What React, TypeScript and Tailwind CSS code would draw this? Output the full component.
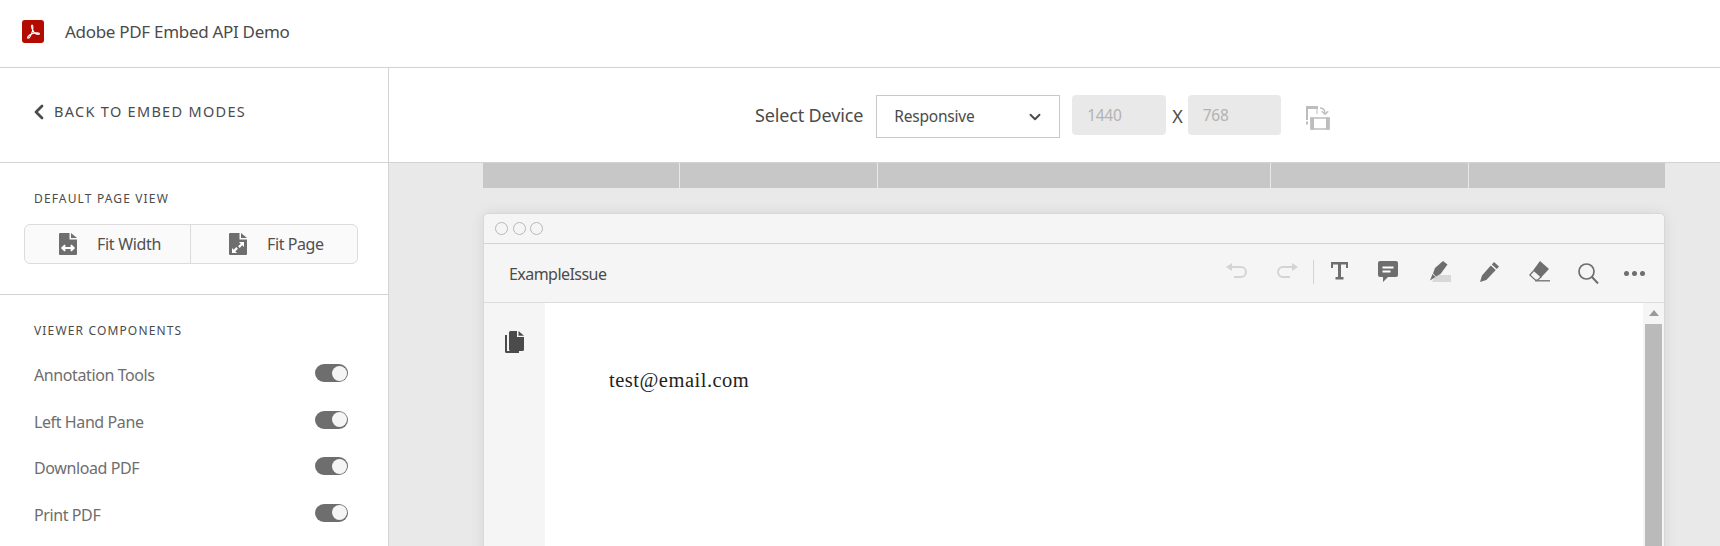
import React from 'react';
import { ChevronDown, ChevronLeft } from 'lucide-react';

const sans = "font-['Noto_Sans',sans-serif]";

function PdfLogo() {
  return (
    <svg width="22" height="23" viewBox="0 0 23 23" preserveAspectRatio="none" className="block">
      <rect width="23" height="23" rx="3" fill="#b30b00" />
      <path
        d="M10.6 5.2c-.9 0-.9 1.5.2 4 .8 1.9 2.4 4 3.9 4.7 1.5.6 3.3.6 3.5-.1.2-.8-1.6-1.1-3.7-.9-2.5.2-5.2 1-6.9 2.3-1.4 1.1-2.2 2.5-1.4 2.9.9.4 2.3-1.2 3.5-3.8 1-2.2 1.7-4.7 1.7-6.9 0-1.300-.2-2.200-.8-2.200z"
        fill="none"
        stroke="#fff"
        strokeWidth="1.2"
      />
    </svg>
  );
}

function PageIcon({ kind }: { kind: 'width' | 'page' }) {
  return (
    <svg width="18" height="22" viewBox="0 0 18 22" className="block">
      <path d="M0 1A1 1 0 0 1 1 0h9.500v6.500H18V21a1 1 0 0 1-1 1H1a1 1 0 0 1-1-1z" fill="#6e6e6e" />
      <path d="M12 0l6 5h-6z" fill="#6e6e6e" />
      {kind === 'width' ? (
        <path d="M4 15h10M6.200 12.300L3.300 15l2.900 2.700M11.800 12.300L14.700 15l-2.900 2.700" stroke="#fff" strokeWidth="2" fill="none" />
      ) : (
        <g fill="#fff">
          <path d="M3 20v-5l1.700 1.700 2.600-2.600 1.600 1.600-2.600 2.600L8 20z" />
          <path d="M15 9v5l-1.700-1.700-2.600 2.600-1.600-1.600 2.600-2.600L10 9z" />
        </g>
      )}
    </svg>
  );
}

function Toggle() {
  return (
    <div className="flex h-[18px] w-[33px] items-center justify-end rounded-full bg-[#6e6e6e] pr-[1.5px]">
      <div className="h-[15px] w-[15px] rounded-full bg-[#f5f5f5]" />
    </div>
  );
}

function RotateIcon() {
  return (
    <svg width="24" height="24" viewBox="0 0 24 24" className="block" fill="none">
      {/* portrait phone */}
      <path d="M0 0h12v3H2v8H0z" fill="#bdbdbd" />
      <path d="M11 3v5" stroke="#c9c9c9" strokeWidth="1.2" />
      <path d="M1 11v9" stroke="#bdbdbd" strokeWidth="2" strokeDasharray="3 1.500" />
      {/* turn arrow */}
      <path d="M14 2c3 0 5 1.500 5 5.500" stroke="#bdbdbd" strokeWidth="1.300" />
      <path d="M15.800 5.300l3.200 3 3.200-3" stroke="#bdbdbd" strokeWidth="1.300" />
      {/* landscape phone */}
      <rect x="5" y="12" width="18" height="11" stroke="#bdbdbd" strokeWidth="1.500" />
      <rect x="4.500" y="11.500" width="3.500" height="12" fill="#bdbdbd" />
      <rect x="20" y="11.500" width="3.500" height="12" fill="#bdbdbd" />
    </svg>
  );
}

function ToolbarIcons() {
  return (
    <div className="ml-auto flex items-center">
      <svg width="22" height="15" viewBox="0 0 22 15" fill="none" className="mb-[5px]">
        <path d="M7 0 1 4l6 4z" fill="#d4d4d4" />
        <path d="M6 4h10a5 5 0 0 1 0 10H9" stroke="#d4d4d4" strokeWidth="2" />
      </svg>
      <svg width="22" height="15" viewBox="0 0 22 15" fill="none" className="mb-[5px] ml-[30px]">
        <path d="M15 0l6 4-6 4z" fill="#d4d4d4" />
        <path d="M16 4H6a5 5 0 0 0 0 10h7" stroke="#d4d4d4" strokeWidth="2" />
      </svg>
      <div className="mb-[3px] ml-[14px] h-[24px] w-px bg-[#d4d4d4]" />
      <svg width="17" height="18" viewBox="0 0 17 18" className="mb-[5px] ml-[17px]">
        <path d="M0 0h17v6h-2V2.500H10V15h2.500v2.500h-8V15H7V2.500H2V6H0z" fill="#6e6e6e" />
      </svg>
      <svg width="20" height="21" viewBox="0 0 20 21" className="mb-[3px] ml-[30px]">
        <path d="M2 0h16a2 2 0 0 1 2 2v12a2 2 0 0 1-2 2H10l-5 5v-5H2a2 2 0 0 1-2-2V2a2 2 0 0 1 2-2z" fill="#6e6e6e" />
        <path d="M4.500 5.500h11v2h-11zM4.500 9.500h8v2h-8z" fill="#fff" />
      </svg>
      <svg width="22" height="21" viewBox="0 0 22 21" className="mb-[3px] ml-[31px]">
        <path d="M7 14h15v7H3z" fill="#d8d8d8" />
        <path d="M14 0l4.500 3.500L11.500 13 7 15.500 4 12.500 6 7z" fill="#6e6e6e" />
        <path d="M3.500 13l3 3-5.500 3.500z" fill="#6e6e6e" />
      </svg>
      <svg width="19" height="20" viewBox="0 0 19 20" className="mb-[3px] ml-[29px]">
        <path d="M14 0l5 4.500L16.800 7l-5-4.500zM10.800 3.500l5 4.500-9.500 10L0 20l2-6.500z" fill="#6e6e6e" />
      </svg>
      <svg width="21" height="21" viewBox="0 0 21 21" fill="none" className="mb-[3px] ml-[30px]">
        <path d="M4.500 10L0.800 14l5.500 5h2.500l3.700-3.500" stroke="#6e6e6e" strokeWidth="1.200" />
        <path d="M11 0l9 8-8 8.500-8-7z" fill="#6e6e6e" />
        <path d="M6 19.800h15" stroke="#6e6e6e" strokeWidth="1.300" />
      </svg>
      <svg width="21" height="21" viewBox="0 0 21 21" fill="none" className="ml-[28px]">
        <circle cx="8.500" cy="8.500" r="7.500" stroke="#6e6e6e" strokeWidth="1.700" />
        <path d="M14 14l6 6.500" stroke="#6e6e6e" strokeWidth="2" />
      </svg>
      <div className="ml-[25px] mr-[19px] mt-[1px] flex gap-[3px]">
        <div className="h-[5px] w-[5px] rounded-full bg-[#6e6e6e]" />
        <div className="h-[5px] w-[5px] rounded-full bg-[#6e6e6e]" />
        <div className="h-[5px] w-[5px] rounded-full bg-[#6e6e6e]" />
      </div>
    </div>
  );
}

export default function App() {
  const components = ['Annotation Tools', 'Left Hand Pane', 'Download PDF', 'Print PDF'];

  return (
    <div className={`flex h-[546px] flex-col overflow-hidden bg-white text-[#4b4b4b] ${sans}`}>
      <header className="flex h-[68px] shrink-0 items-center border-b border-[#d3d3d3] pb-[4px] pl-[22px]">
        <PdfLogo />
        <span className="ml-[21px] text-[17px] tracking-[-0.3px]">Adobe PDF Embed API Demo</span>
      </header>

      <div className="flex min-h-0 flex-1">
        <aside className="w-[389px] shrink-0 border-r border-[#d3d3d3]">
          <div className="flex h-[95px] items-center border-b border-[#d3d3d3] pb-[6px] pl-[27px]">
            <ChevronLeft size={24} strokeWidth={2.8} className="text-[#4b4b4b]" />
            <span className="ml-[3px] text-[14.5px] tracking-[1.3px]">BACK TO EMBED MODES</span>
          </div>

          <div className="h-[132px] border-b border-[#d3d3d3] px-[24px] pt-[27px]">
            <div className="pl-[10px] text-[12px] leading-[18px] tracking-[1.15px]">DEFAULT PAGE VIEW</div>
            <div className="mt-[16px] flex h-[40px] w-[334px] rounded-[6px] border border-[#dcdcdc] bg-[#fafafa] text-[#505050]">
              <div className="flex w-[166px] items-center border-r border-[#dcdcdc] pl-[34px]">
                <PageIcon kind="width" />
                <span className="ml-[20px] text-[16px] tracking-[-0.3px]">Fit Width</span>
              </div>
              <div className="flex flex-1 items-center pl-[38px]">
                <PageIcon kind="page" />
                <span className="ml-[20px] text-[16px] tracking-[-0.4px]">Fit Page</span>
              </div>
            </div>
          </div>

          <div className="pl-[34px] pr-[40px] pt-[27px]">
            <div className="text-[12px] leading-[18px] tracking-[1.15px]">VIEWER COMPONENTS</div>
            <div className="mt-[24px] flex flex-col gap-[28.5px]">
              {components.map((name) => (
                <div key={name} className="flex h-[18px] items-center justify-between">
                  <span className="mt-[4px] text-[16px] tracking-[-0.4px] text-[#6e6e6e]">{name}</span>
                  <Toggle />
                </div>
              ))}
            </div>
          </div>
        </aside>

        <main className="flex min-w-0 flex-1 flex-col">
          <div className="flex h-[95px] shrink-0 items-start border-b border-[#d3d3d3] pl-[366px] pt-[27px]">
            <span className="mt-[8px] text-[18px] leading-[24px] tracking-[-0.15px]">Select Device</span>
            <div className="ml-[13px] flex h-[43px] w-[184px] items-center justify-between border border-[#c9c9c9] bg-white pl-[17px] pr-[15px] text-[15.5px] tracking-[-0.2px]">
              <span>Responsive</span>
              <ChevronDown size={18} strokeWidth={2.5} className="text-[#4b4b4b]" />
            </div>
            <div className="ml-[12px] flex h-[40px] w-[94px] items-center rounded-[4px] bg-[#e9e9e9] pl-[15px] pt-[2px] text-[15.5px] tracking-[-0.3px] text-[#b3b3b3]">
              1440
            </div>
            <span className="ml-[6px] mt-[9px] text-[18px] leading-[24px]">X</span>
            <div className="ml-[5px] flex h-[40px] w-[93px] items-center rounded-[4px] bg-[#e9e9e9] pl-[15px] pt-[2px] text-[15.5px] tracking-[-0.3px] text-[#b3b3b3]">
              768
            </div>
            <div className="ml-[25px] mt-[11px]">
              <RotateIcon />
            </div>
          </div>

          <div className="min-h-0 flex-1 overflow-hidden bg-[#e9e9e9] pl-[94px] pr-[55px]">
            <div className="flex h-[25px] bg-[#c7c7c7]">
              <div className="w-[197px] border-r border-[#e9e9e9]" />
              <div className="w-[198px] border-r border-[#e9e9e9]" />
              <div className="w-[393px] border-r border-[#e9e9e9]" />
              <div className="w-[198px] border-r border-[#e9e9e9]" />
              <div className="flex-1" />
            </div>

            <div className="mt-[25px] h-[400px] overflow-hidden rounded-t-[5px] border-x border-t border-[#d8d8d8] bg-[#f5f5f5] shadow-[0_0_14px_rgba(0,0,0,0.08)]">
              <div className="flex h-[30px] items-center gap-[4.5px] border-b border-[#d3d3d3] pl-[11px]">
                <div className="h-[13px] w-[13px] rounded-full border border-[#b8b8b8]" />
                <div className="h-[13px] w-[13px] rounded-full border border-[#b8b8b8]" />
                <div className="h-[13px] w-[13px] rounded-full border border-[#b8b8b8]" />
              </div>
              <div className="flex h-[59px] items-center border-b border-[#dcdcdc] pl-[25px]">
                <span className="mt-[1px] text-[16px] tracking-[-0.55px]">ExampleIssue</span>
                <ToolbarIcons />
              </div>
              <div className="flex h-[300px]">
                <div className="w-[61px] shrink-0 pl-[21px] pt-[28px]">
                  <svg width="19" height="22" viewBox="0 0 19 22">
                    <path d="M0 4h2v16h12v2H1.500A1.500 1.500 0 0 1 0 20.500z" fill="#4b4b4b" />
                    <path d="M4 1.500A1.500 1.500 0 0 1 5.500 0H12v6h7v12.500a1.500 1.500 0 0 1-1.500 1.500h-12A1.500 1.500 0 0 1 4 18.500z" fill="#4b4b4b" />
                    <path d="M13.500 0 19 4.700h-5.500z" fill="#4b4b4b" />
                  </svg>
                </div>
                <div className="flex-1 bg-white pl-[64px] pt-[62px] font-['Liberation_Serif',serif] text-[20.5px] leading-[30px] tracking-[0.5px] text-[#1f1f1f]">
                  test@email.com
                </div>
                <div className="flex w-[21px] shrink-0 flex-col items-center pt-[7px]">
                  <div className="h-0 w-0 border-x-[5px] border-b-[6px] border-x-transparent border-b-[#9a9a9a]" />
                  <div className="mt-[8px] h-[240px] w-[17px] bg-[#bababa]" />
                </div>
              </div>
            </div>
          </div>
        </main>
      </div>
    </div>
  );
}
